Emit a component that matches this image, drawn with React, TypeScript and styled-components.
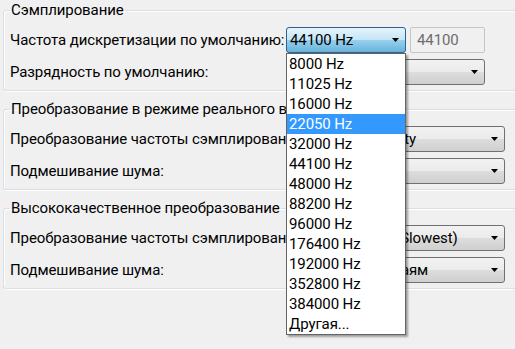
import React from "react";
import styled, { createGlobalStyle, css } from "styled-components";

const Global = createGlobalStyle`
  html, body { margin: 0; padding: 0; background: #f0f0f0; }
  body {
    font-family: Roboto, "Noto Sans", sans-serif;
    font-size: 15px;
    letter-spacing: -0.1px;
    color: #000;
  }
`;

const Page = styled.div`
  width: 515px;
  height: 349px;
  overflow: hidden;
  background: #f0f0f0;
  padding-left: 3px;
  box-sizing: border-box;
  display: flex;
  flex-direction: column;
  gap: 8px;
`;

const Group = styled.fieldset`
  margin: 0 -20px 0 0;
  padding: 7px 0 5px 6px;
  border: 1px solid #d5dfe5;
  border-radius: 3px;
  box-shadow: inset 1px 1px 0 #fff, 1px 1px 0 #fff;
  min-width: 0;
  display: flex;
  flex-direction: column;
  gap: 6px;
`;

const Title = styled.legend`
  padding: 0 1px;
  line-height: 20px;
  font-size: 15px;
  white-space: nowrap;
`;

const Row = styled.div<{ $labelWidth: number }>`
  display: grid;
  grid-template-columns: ${(p) => p.$labelWidth}px auto;
  align-items: center;
  height: 26px;
`;

const Label = styled.span`
  white-space: nowrap;
  line-height: 20px;
`;

const Controls = styled.div`
  display: flex;
  gap: 4px;
  align-items: center;
`;

const activeBg = css`
  border-color: #2c628b;
  background: linear-gradient(#e5f4fc 0%, #c4e5f6 50%, #98d1ef 50%, #68b3db 100%);
`;

const ComboBox = styled.div<{ $width: number; $active?: boolean }>`
  position: relative;
  box-sizing: border-box;
  width: ${(p) => p.$width}px;
  height: 26px;
  border: 1px solid #707070;
  border-radius: 3px;
  background: linear-gradient(#f2f2f2 0%, #ebebeb 50%, #dddddd 50%, #cfcfcf 100%);
  display: flex;
  align-items: center;
  padding: 0 6px 0 3px;
  ${(p) => p.$active && activeBg}
`;

const ComboValue = styled.span`
  flex: 1;
  white-space: nowrap;
  overflow: hidden;
  line-height: 20px;
`;

const Arrow = styled.svg`
  flex: none;
  width: 7px;
  height: 4px;
`;

const TextField = styled.div`
  box-sizing: border-box;
  width: 75px;
  height: 26px;
  border: 1px solid #c6c6c6;
  border-radius: 2px;
  background: #f0f0f0;
  color: #6d6d6d;
  padding-left: 6px;
  line-height: 24px;
`;

const DropList = styled.ul`
  position: absolute;
  left: -1px;
  top: calc(100% + 1px);
  width: 120px;
  box-sizing: border-box;
  margin: 0;
  padding: 0;
  list-style: none;
  background: #fff;
  border: 1px solid #646464;
  box-shadow: 2px 2px 2px rgba(0, 0, 0, 0.35);
  z-index: 10;
`;

const DropItem = styled.li<{ $selected?: boolean }>`
  height: 20px;
  line-height: 20px;
  padding-left: 2px;
  white-space: nowrap;
  color: ${(p) => (p.$selected ? "#fff" : "#000")};
  background: ${(p) => (p.$selected ? "#3399ff" : "transparent")};
`;

const rates = [
  "8000 Hz",
  "11025 Hz",
  "16000 Hz",
  "22050 Hz",
  "32000 Hz",
  "44100 Hz",
  "48000 Hz",
  "88200 Hz",
  "96000 Hz",
  "176400 Hz",
  "192000 Hz",
  "352800 Hz",
  "384000 Hz",
  "Другая...",
];

const DownArrow = () => (
  <Arrow viewBox="0 0 7 4">
    <path d="M0 0H7L3.5 4Z" fill="#000" />
  </Arrow>
);

type ComboProps = {
  width: number;
  value: string;
  active?: boolean;
  children?: React.ReactNode;
};

const Combo = ({ width, value, active, children }: ComboProps) => (
  <ComboBox $width={width} $active={active}>
    <ComboValue>{value}</ComboValue>
    <DownArrow />
    {children}
  </ComboBox>
);

export default function App() {
  return (
    <>
      <Global />
      <Page>
        <Group>
          <Title>Сэмплирование</Title>
          <Row $labelWidth={276}>
            <Label>Частота дискретизации по умолчанию:</Label>
            <Controls>
              <Combo width={120} value="44100 Hz" active>
                <DropList>
                  {rates.map((r) => (
                    <DropItem key={r} $selected={r === "22050 Hz"}>
                      {r}
                    </DropItem>
                  ))}
                </DropList>
              </Combo>
              <TextField>44100</TextField>
            </Controls>
          </Row>
          <Row $labelWidth={276}>
            <Label>Разрядность по умолчанию:</Label>
            <Controls>
              <Combo width={199} value="32-bit float" />
            </Controls>
          </Row>
        </Group>

        <Group>
          <Title>Преобразование в режиме реального времени</Title>
          <Row $labelWidth={299}>
            <Label>Преобразование частоты сэмплирования:</Label>
            <Controls>
              <Combo width={196} value="Medium Quality" />
            </Controls>
          </Row>
          <Row $labelWidth={299}>
            <Label>Подмешивание шума:</Label>
            <Controls>
              <Combo width={196} value="Нет" />
            </Controls>
          </Row>
        </Group>

        <Group>
          <Title>Высококачественное преобразование</Title>
          <Row $labelWidth={299}>
            <Label>Преобразование частоты сэмплирования:</Label>
            <Controls>
              <Combo width={196} value="Best Quality (Slowest)" />
            </Controls>
          </Row>
          <Row $labelWidth={299}>
            <Label>Подмешивание шума:</Label>
            <Controls>
              <Combo width={196} value="Форма по краям" />
            </Controls>
          </Row>
        </Group>
      </Page>
    </>
  );
}
